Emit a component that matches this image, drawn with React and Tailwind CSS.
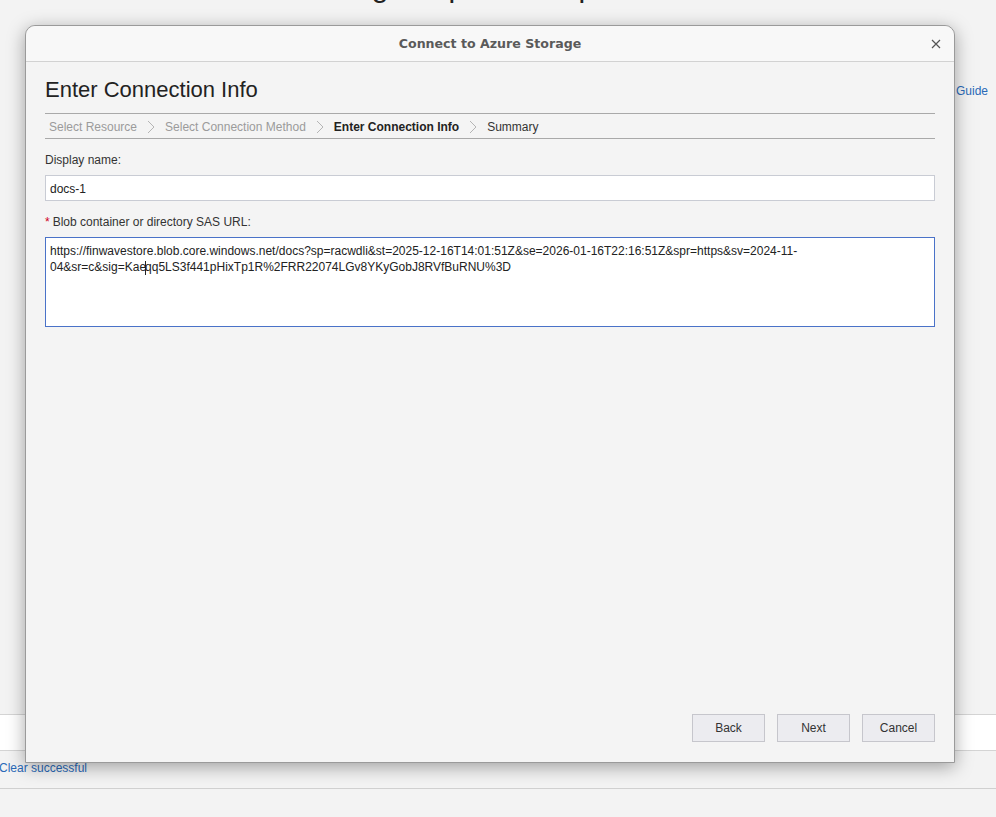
import React from 'react';

const sasLine1 =
  'https://finwavestore.blob.core.windows.net/docs?sp=racwdli&st=2025-12-16T14:01:51Z&se=2026-01-16T22:16:51Z&spr=https&sv=2024-11-';
const sasLine2a = '04&sr=c&sig=Kae';
const sasLine2b = 'qq5LS3f441pHixTp1R%2FRR22074LGv8YKyGobJ8RVfBuRNU%3D';

function Chevron() {
  return (
    <svg width="8" height="14" viewBox="0 0 8 14" className="shrink-0">
      <path d="M1 1 L7 7 L1 13" fill="none" stroke="#b5b5b5" strokeWidth="1" />
    </svg>
  );
}

export default function App() {
  const steps = [
    { label: 'Select Resource', state: 'done' },
    { label: 'Select Connection Method', state: 'done' },
    { label: 'Enter Connection Info', state: 'active' },
    { label: 'Summary', state: 'todo' },
  ];

  return (
    <div
      className="relative w-[996px] h-[817px] overflow-hidden bg-[#f3f3f3] text-[#222]"
      style={{ fontFamily: '"Liberation Sans", Arial, sans-serif' }}
    >
      {/* Page behind the dialog */}
      <div className="flex flex-col h-full">
        <div className="h-[60px] relative">
          <div className="absolute left-[300px] -top-[36px] text-[30px] leading-[45px] text-[#222] whitespace-nowrap">Storage Explorer Help</div>
        </div>
        <div className="flex justify-end pr-[8px] mt-[22px]">
          <span className="text-[12px] text-[#2a6ab8]">Guide</span>
        </div>
        <div className="flex-1" />
        <div className="h-[37px] bg-white border-y border-[#d4d4d4]" />
        <div className="h-[38px] flex items-start pt-[8px] border-b border-[#d0d0d0] -ml-[1px]">
          <span className="text-[12px] text-[#2a6ab8]">Clear successful</span>
        </div>
        <div className="h-[28px]" />
      </div>

      {/* Modal dialog */}
      <div className="absolute left-[25px] top-[25px] w-[930px] h-[738px] flex flex-col bg-[#f4f4f4] border border-[#9a9a9a] rounded-t-[10px] shadow-[0_4px_18px_rgba(0,0,0,0.35)]">
        <div className="h-[36px] shrink-0 relative flex items-center justify-center pt-[2px] bg-[#f8f8f8] rounded-t-[10px] border-b border-[#d2d2d2]">
          <span
            className="text-[12.6px] font-bold text-[#5a5a5a]"
            style={{ fontFamily: '"DejaVu Sans", sans-serif' }}
          >
            Connect to Azure Storage
          </span>
          <button className="absolute right-[13px] top-[13px]">
            <svg width="10" height="10" viewBox="0 0 10 10" className="block">
              <path d="M1 1 L9 9 M9 1 L1 9" stroke="#555" strokeWidth="1.2" />
            </svg>
          </button>
        </div>

        <div className="flex-1 flex flex-col px-[19px] pb-[20px]">
          <h1 className="text-[22px] leading-[26px] text-[#222] mt-[15px] mb-[10px]">Enter Connection Info</h1>

          <div className="border-y border-[#a9a9a9] h-[26px] flex items-center gap-[10px] pl-[4px] pt-[1px] text-[12px]">
            {steps.map((s, i) => (
              <React.Fragment key={s.label}>
                {i > 0 && <Chevron />}
                <span
                  className={
                    s.state === 'done'
                      ? 'text-[#9b9b9b]'
                      : s.state === 'active'
                      ? 'font-bold text-[#222]'
                      : 'text-[#333]'
                  }
                >
                  {s.label}
                </span>
              </React.Fragment>
            ))}
          </div>

          <label className="text-[12px] text-[#333] mt-[14px] leading-[14px]">Display name:</label>
          <div className="mt-[8px] h-[26px] bg-white border border-[#c9ccd4] flex items-center px-[4px] pt-[1px] text-[12px] text-[#222]">
            docs-1
          </div>

          <label className="text-[12px] text-[#333] mt-[14px] leading-[14px] flex items-center">
            <span className="text-[#d0021b] mr-[3px]">*</span>Blob container or directory SAS URL:
          </label>
          <div className="mt-[8px] h-[90px] bg-white border border-[#4a72c8] px-[4px] pt-[5px] text-[12px] leading-[16px] text-[#222] whitespace-nowrap">
            {sasLine1}
            <br />
            {sasLine2a}
            <span className="inline-block w-px h-[14px] bg-[#222] align-middle -mx-px" />
            {sasLine2b}
          </div>

          <div className="flex-1" />

          <div className="flex justify-end gap-[12px]">
            {['Back', 'Next', 'Cancel'].map((b) => (
              <button
                key={b}
                className="w-[73px] h-[28px] bg-[#ececf0] border border-[#c6c6cc] text-[12px] text-[#333]"
              >
                {b}
              </button>
            ))}
          </div>
        </div>
      </div>
    </div>
  );
}
